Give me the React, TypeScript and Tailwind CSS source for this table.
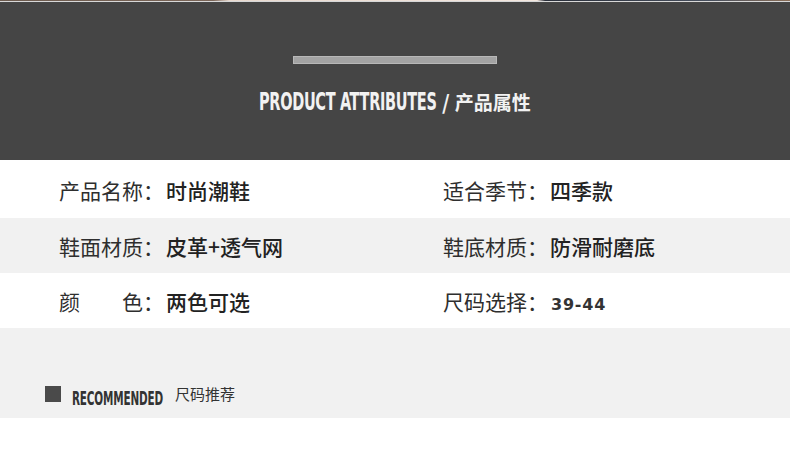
const rows: [string, string, string, string][] = [
  ["产品名称：", "时尚潮鞋", "适合季节：", "四季款"],
  ["鞋面材质：", "皮革+透气网", "鞋底材质：", "防滑耐磨底"],
  ["颜　　色：", "两色可选", "尺码选择：", "39-44"],
];

const cn = "font-['Noto_Sans_CJK_SC','Noto_Sans',sans-serif]";
const cond = "font-['DejaVu_Sans_Condensed','DejaVu_Sans',sans-serif]";

function Value({ text }: { text: string }) {
  // latin sizes come out narrower and bolder in the picture
  if (/^[0-9-]+$/.test(text)) {
    return <span className="ml-[3px] font-['DejaVu_Sans',sans-serif] font-bold text-[16px] tracking-[0.8px] text-[#333]">{text}</span>;
  }
  return <span className="ml-[2px] font-medium text-[#222]">{text}</span>;
}

export default function App() {
  return (
    <div className={`w-[790px] h-[471px] bg-white overflow-hidden ${cn}`}>
      <div className="h-px bg-[linear-gradient(90deg,#6b5a4e_0%,#7a6558_27%,#e8d9cf_29%,#f2e6de_68%,#2a2f3a_69%,#48505e_90%,#8a6e58_100%)]" />
      <div className="h-px bg-[#d8d8d8]" />

      <div className="h-[158px] bg-[#454545] flex flex-col items-center">
        <div className="mt-[54px] w-[204px] h-[8px] bg-[#a3a3a3] border border-[#b8b8b8]" />
        <div className="mt-[26px] flex items-center text-[#f2f2f2]">
          <div className="w-[182px] h-[24px] overflow-visible">
            <span className={`inline-block whitespace-nowrap origin-left scale-x-[0.645] ${cond} font-bold text-[25px] leading-[24px] tracking-[-0.5px]`}>
              PRODUCT ATTRIBUTES
            </span>
          </div>
          <span className="ml-[1px] text-[20px] font-bold leading-[24px]">/</span>
          <span className="ml-[5px] text-[19px] font-bold leading-[24px]">产品属性</span>
        </div>
      </div>

      {rows.map((r, i) => (
        <div
          key={i}
          className={`grid grid-cols-[384px_1fr] items-center pl-[59px] pt-[3px] text-[21px] text-[#2e2e2e] ${
            i === 0 ? "h-[58px]" : "h-[55px]"
          } ${i === 1 ? "bg-[#f1f1f1]" : "bg-white"}`}
        >
          <div className="whitespace-nowrap">
            <span>{r[0]}</span>
            <Value text={r[1]} />
          </div>
          <div className="whitespace-nowrap">
            <span>{r[2]}</span>
            <Value text={r[3]} />
          </div>
        </div>
      ))}

      <div className="h-[90px] bg-[#f1f1f1] pl-[45px] pt-[58px]">
        <div className="flex items-center h-[16px]">
          <div className="w-[16px] h-[16px] bg-[#4a4a4a]" />
          <div className="ml-[11px] w-[92px] h-[16px]">
            <span className={`inline-block whitespace-nowrap origin-left scale-x-[0.58] ${cond} font-bold text-[20px] leading-[16px] text-[#333] tracking-[-0.3px]`}>
              RECOMMENDED
            </span>
          </div>
          <span className="ml-[11px] text-[15px] leading-[16px] text-[#333]">尺码推荐</span>
        </div>
      </div>
    </div>
  );
}
